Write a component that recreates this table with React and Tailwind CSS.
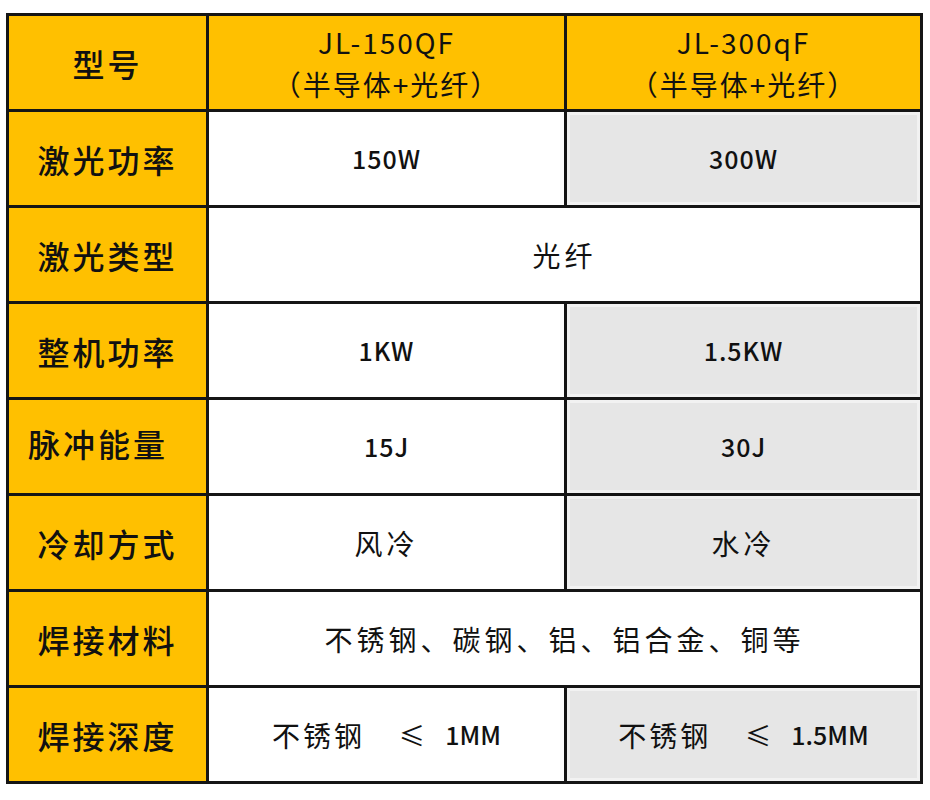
import React from 'react';

const FONT = { fontFamily: '"Noto Sans CJK SC", "DejaVu Sans", sans-serif' };

const rows = [
  { label: '激光功率', a: '150W', b: '300W', latin: true },
  { label: '激光类型', span: '光纤' },
  { label: '整机功率', a: '1KW', b: '1.5KW', latin: true },
  { label: '脉冲能量', a: '15J', b: '30J', latin: true, shift: true },
  { label: '冷却方式', a: '风冷', b: '水冷' },
  { label: '焊接材料', span: '不锈钢、碳钢、铝、铝合金、铜等' },
];

const Depth = ({ value }) => (
  <span className="flex items-center text-[28px] text-[#111]">
    <span className="tracking-[3px]">不锈钢</span>
    <span className="ml-[34px] text-[26px]">≤</span>
    <span className="ml-[20px] text-[25px] font-medium">{value}</span>
  </span>
);

const App = () => {
  return (
    <div className="w-[930px] h-[800px] bg-white pt-[13px] pl-[6px]" style={FONT}>
      {/* Spec table */}
      <div className="w-[917px] grid grid-cols-[197px_355px_353px] auto-rows-[93px] gap-[3px] p-[3px] bg-[#151515]">
        {/* header */}
        <div className="bg-[#ffc000] flex items-center justify-center text-[32px] font-medium tracking-[3px] text-[#111]">型号</div>
        <div className="bg-[#ffc000] flex flex-col items-center justify-center text-[#111] leading-[42px]">
          <span className="text-[28px] tracking-[2px]">JL-150QF</span>
          <span className="text-[28px] tracking-[2px]">（半导体+光纤）</span>
        </div>
        <div className="bg-[#ffc000] flex flex-col items-center justify-center text-[#111] leading-[42px]">
          <span className="text-[28px] tracking-[2px]">JL-300qF</span>
          <span className="text-[28px] tracking-[2px]">（半导体+光纤）</span>
        </div>

        {rows.map((r) => (
          <React.Fragment key={r.label}>
            <div
              className={`bg-[#ffc000] flex items-center text-[32px] font-medium tracking-[3px] text-[#111] ${
                r.shift ? 'justify-start pl-[19px] pb-[8px]' : 'justify-center'
              }`}
            >
              {r.label}
            </div>
            {r.span ? (
              <div className="col-span-2 bg-white flex items-center justify-center text-[28px] tracking-[4px] text-[#111]">
                {r.span}
              </div>
            ) : (
              <>
                <div
                  className={`bg-white flex items-center justify-center text-[#111] ${
                    r.latin ? 'text-[25px] font-medium tracking-[1px]' : 'text-[28px] tracking-[4px]'
                  }`}
                >
                  {r.a}
                </div>
                <div
                  className={`bg-[#e6e6e6] border-[3px] border-[#f2f2f2] flex items-center justify-center text-[#111] ${
                    r.latin ? 'text-[25px] font-medium tracking-[1px]' : 'text-[28px] tracking-[4px]'
                  }`}
                >
                  {r.b}
                </div>
              </>
            )}
          </React.Fragment>
        ))}

        <div className="bg-[#ffc000] flex items-center justify-center text-[32px] font-medium tracking-[3px] text-[#111]">焊接深度</div>
        <div className="bg-white flex items-center justify-center">
          <Depth value="1MM" />
        </div>
        <div className="bg-[#e6e6e6] border-[3px] border-[#f2f2f2] flex items-center justify-center">
          <Depth value="1.5MM" />
        </div>
      </div>
    </div>
  );
};

export default App;
